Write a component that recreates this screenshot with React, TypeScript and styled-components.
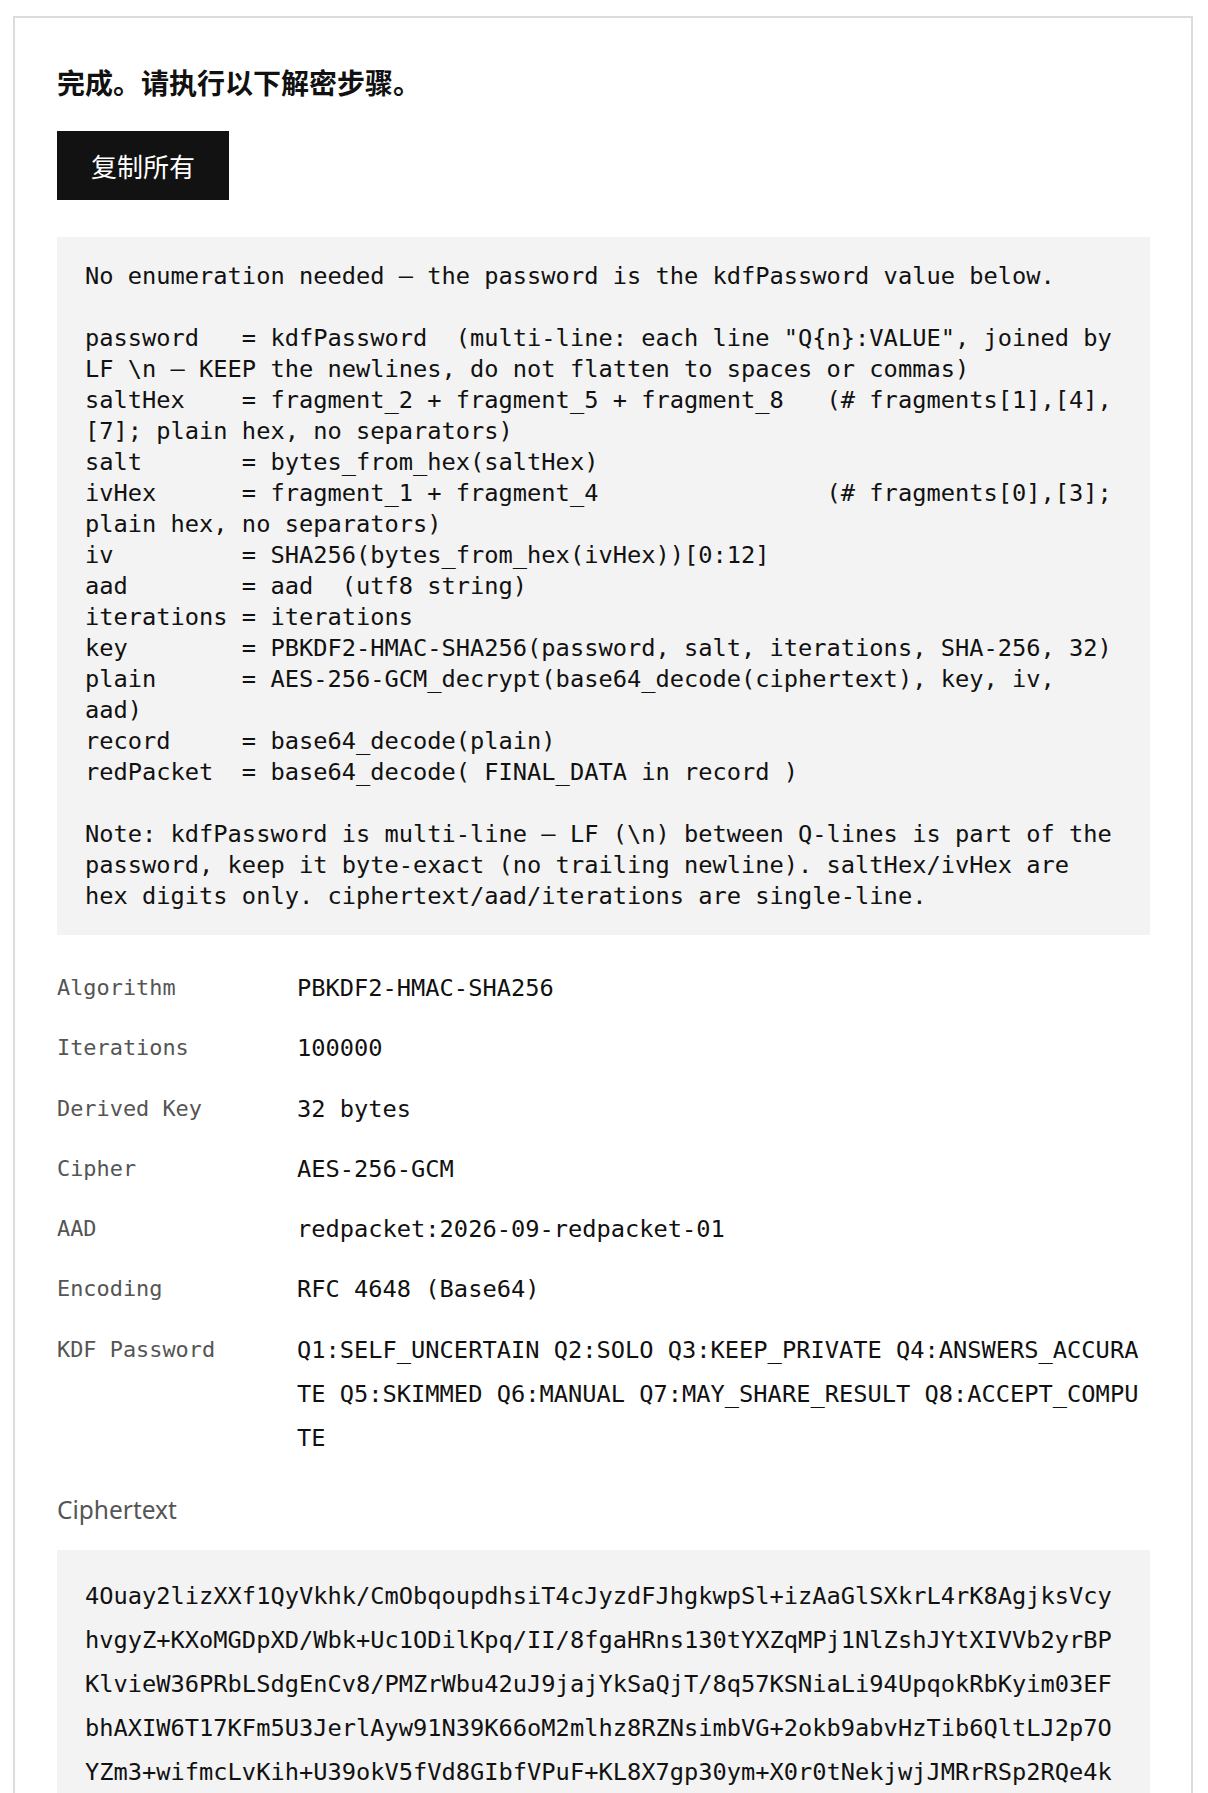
import React from "react";
import styled, { createGlobalStyle } from "styled-components";

const Global = createGlobalStyle`
  html, body { margin: 0; padding: 0; background: #ffffff; }
  body { font-family: "Noto Sans", "Noto Sans CJK SC", sans-serif; color: #111; }
`;

const Card = styled.section`
  margin: 16px 15px 0 13px;
  border: 2px solid #dcdcdc;
  border-bottom: none;
  padding: 46px 41px 60px 42px;
`;

const Title = styled.h2`
  margin: 0;
  font: 700 28px/36px "Noto Sans CJK SC", "Noto Sans", sans-serif;
  color: #111;
`;

const CopyButton = styled.button`
  display: inline-flex;
  align-items: center;
  justify-content: center;
  margin-top: 31px;
  height: 69px;
  padding: 0 34px;
  border: none;
  border-radius: 0;
  background: #121212;
  color: #fff;
  font: 400 26px/1 "Noto Sans CJK SC", "Noto Sans", sans-serif;
  cursor: pointer;
`;

const mono = `"DejaVu Sans Mono", "Liberation Mono", monospace`;

const Steps = styled.pre`
  margin: 37px 0 0;
  padding: 24px 28px 23px;
  background: #f3f3f3;
  color: #111;
  font-family: ${mono};
  font-size: 23.7px;
  line-height: 31px;
  white-space: pre;
  overflow: hidden;
`;

const Meta = styled.dl`
  margin: 23px 0 0;
  display: grid;
  grid-template-columns: 240px 1fr;
`;

const Label = styled.dt`
  margin: 0;
  padding: 8px 0;
  font-family: ${mono};
  font-size: 21.9px;
  line-height: 44.3px;
  color: #555;
`;

const Value = styled.dd`
  margin: 0;
  padding: 8px 0;
  font-family: ${mono};
  font-size: 23.7px;
  line-height: 44.3px;
  color: #111;
  word-break: break-all;
`;

const SectionLabel = styled.h3`
  margin: 22px 0 0;
  font: 400 24.5px/38px "Noto Sans", "Open Sans", sans-serif;
  color: #555;
`;

const CipherBlock = styled.div`
  margin-top: 21px;
  padding: 24px 28px;
  background: #f3f3f3;
  color: #111;
  font-family: ${mono};
  font-size: 23.7px;
  line-height: 44px;
  word-break: break-all;
`;

const steps = [
  "No enumeration needed \u2014 the password is the kdfPassword value below.",
  "",
  'password   = kdfPassword  (multi-line: each line "Q{n}:VALUE", joined by',
  "LF \\n \u2014 KEEP the newlines, do not flatten to spaces or commas)",
  "saltHex    = fragment_2 + fragment_5 + fragment_8   (# fragments[1],[4],",
  "[7]; plain hex, no separators)",
  "salt       = bytes_from_hex(saltHex)",
  "ivHex      = fragment_1 + fragment_4                (# fragments[0],[3];",
  "plain hex, no separators)",
  "iv         = SHA256(bytes_from_hex(ivHex))[0:12]",
  "aad        = aad  (utf8 string)",
  "iterations = iterations",
  "key        = PBKDF2-HMAC-SHA256(password, salt, iterations, SHA-256, 32)",
  "plain      = AES-256-GCM_decrypt(base64_decode(ciphertext), key, iv,",
  "aad)",
  "record     = base64_decode(plain)",
  "redPacket  = base64_decode( FINAL_DATA in record )",
  "",
  "Note: kdfPassword is multi-line \u2014 LF (\\n) between Q-lines is part of the",
  "password, keep it byte-exact (no trailing newline). saltHex/ivHex are",
  "hex digits only. ciphertext/aad/iterations are single-line.",
].join("\n");

const meta: [string, string][] = [
  ["Algorithm", "PBKDF2-HMAC-SHA256"],
  ["Iterations", "100000"],
  ["Derived Key", "32 bytes"],
  ["Cipher", "AES-256-GCM"],
  ["AAD", "redpacket:2026-09-redpacket-01"],
  ["Encoding", "RFC 4648 (Base64)"],
  [
    "KDF Password",
    "Q1:SELF_UNCERTAIN Q2:SOLO Q3:KEEP_PRIVATE Q4:ANSWERS_ACCURATE Q5:SKIMMED Q6:MANUAL Q7:MAY_SHARE_RESULT Q8:ACCEPT_COMPUTE",
  ],
];

const ciphertext =
  "4Ouay2lizXXf1QyVkhk/CmObqoupdhsiT4cJyzdFJhgkwpSl+izAaGlSXkrL4rK8AgjksVcy" +
  "hvgyZ+KXoMGDpXD/Wbk+Uc1ODilKpq/II/8fgaHRns130tYXZqMPj1NlZshJYtXIVVb2yrBP" +
  "KlvieW36PRbLSdgEnCv8/PMZrWbu42uJ9jajYkSaQjT/8q57KSNiaLi94UpqokRbKyim03EF" +
  "bhAXIW6T17KFm5U3JerlAyw91N39K66oM2mlhz8RZNsimbVG+2okb9abvHzTib6QltLJ2p7O" +
  "YZm3+wifmcLvKih+U39okV5fVd8GIbfVPuF+KL8X7gp30ym+X0r0tNekjwjJMRrRSp2RQe4k";

export default function App() {
  return (
    <>
      <Global />
      <Card>
        <Title>完成。请执行以下解密步骤。</Title>
        <CopyButton type="button">复制所有</CopyButton>
        <Steps>{steps}</Steps>
        <Meta>
          {meta.map(([k, v]) => (
            <React.Fragment key={k}>
              <Label>{k}</Label>
              <Value>{v}</Value>
            </React.Fragment>
          ))}
        </Meta>
        <SectionLabel>Ciphertext</SectionLabel>
        <CipherBlock>{ciphertext}</CipherBlock>
      </Card>
    </>
  );
}
